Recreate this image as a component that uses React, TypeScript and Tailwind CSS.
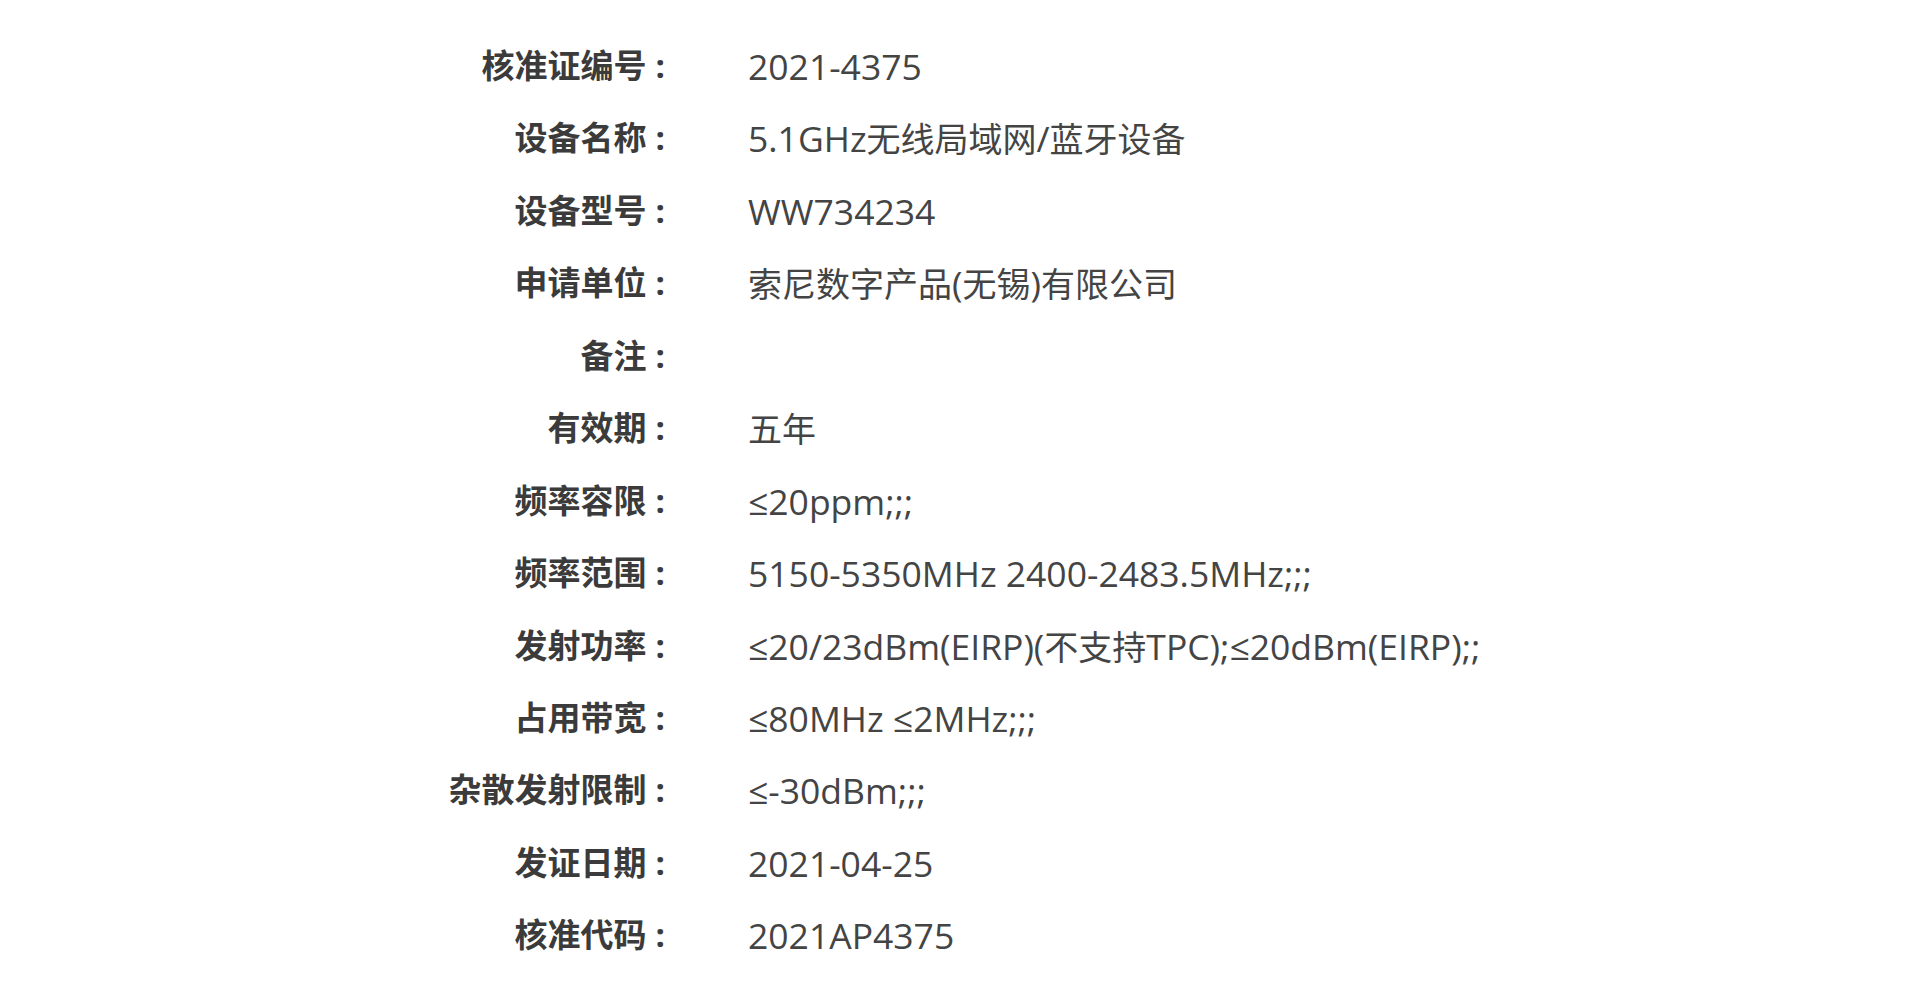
const rows: [string, string][] = [
  ["核准证编号", "2021-4375"],
  ["设备名称", "5.1GHz无线局域网/蓝牙设备"],
  ["设备型号", "WW734234"],
  ["申请单位", "索尼数字产品(无锡)有限公司"],
  ["备注", ""],
  ["有效期", "五年"],
  ["频率容限", "≤20ppm;;;"],
  ["频率范围", "5150-5350MHz 2400-2483.5MHz;;;"],
  ["发射功率", "≤20/23dBm(EIRP)(不支持TPC);≤20dBm(EIRP);;"],
  ["占用带宽", "≤80MHz ≤2MHz;;;"],
  ["杂散发射限制", "≤-30dBm;;;"],
  ["发证日期", "2021-04-25"],
  ["核准代码", "2021AP4375"],
];

// CJK runs are set a touch smaller than the latin text
function Value({ text }: { text: string }) {
  const parts = text.split(/([\u4e00-\u9fff]+)/);
  return (
    <>
      {parts.map((p, i) =>
        i % 2 === 1 ? (
          <span key={i} className="text-[34px]">
            {p}
          </span>
        ) : (
          p
        )
      )}
    </>
  );
}

function App() {
  return (
    <div
      className="min-h-screen bg-white pt-[30px]"
      style={{ fontFamily: '"Open Sans", "Noto Sans CJK SC", sans-serif' }}
    >
      <div className="grid grid-cols-[665px_1fr] auto-rows-[72.44px] gap-x-[83px] leading-[72.44px]">
        {rows.map(([label, value]) => (
          <div key={label} className="contents">
            <div className="text-right text-[33px] font-bold text-[#3b3b3b] overflow-hidden">
              {label}
              <span className="ml-[9px]">:</span>
            </div>
            <div className="text-[35.5px] text-[#444444] whitespace-nowrap overflow-hidden">
              <Value text={value} />
            </div>
          </div>
        ))}
      </div>
    </div>
  );
}

export default App;
